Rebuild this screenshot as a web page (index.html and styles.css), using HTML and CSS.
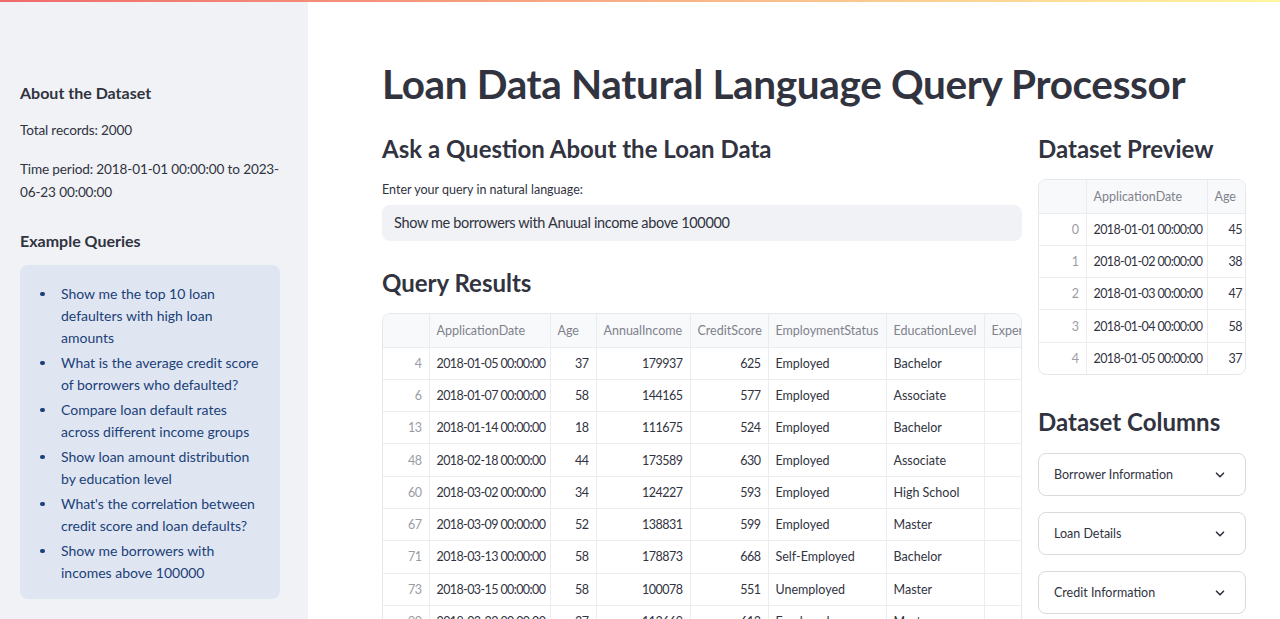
FILE: index.html
```html
<!DOCTYPE html>
<html lang="en">
<head>
<meta charset="utf-8">
<title>Loan Data Natural Language Query Processor</title>
<link rel="stylesheet" href="styles.css">
</head>
<body>
<div class="decoration"></div>
<div class="app">
  <aside class="sidebar">
    <h4 class="side-h">About the Dataset</h4>
    <p class="side-p">Total records: 2000</p>
    <p class="side-p">Time period: 2018-01-01 00:00:00 to 2023-06-23 00:00:00</p>
    <h4 class="side-h side-h2">Example Queries</h4>
    <div class="info">
      <ul class="info-list">
        <li>Show me the top 10 loan defaulters with high loan amounts</li>
        <li>What is the average credit score of borrowers who defaulted?</li>
        <li>Compare loan default rates across different income groups</li>
        <li>Show loan amount distribution by education level</li>
        <li>What's the correlation between credit score and loan defaults?</li>
        <li>Show me borrowers with incomes above 100000</li>
      </ul>
    </div>
  </aside>
  <main class="main">
    <h1 class="title">Loan Data Natural Language Query Processor</h1>
    <div class="cols">
      <section class="col-left">
        <h3 class="h3">Ask a Question About the Loan Data</h3>
        <label class="label">Enter your query in natural language:</label>
        <div class="input">Show me borrowers with Anuual income above 100000</div>
        <h3 class="h3 h3-results">Query Results</h3>
        <div class="grid">
          <table class="tbl tbl-main">
            <colgroup>
              <col style="width:46px"><col style="width:121px"><col style="width:46px"><col style="width:94px"><col style="width:78px"><col style="width:118px"><col style="width:98px"><col style="width:130px">
            </colgroup>
            <thead>
              <tr><th></th><th>ApplicationDate</th><th>Age</th><th>AnnualIncome</th><th>CreditScore</th><th>EmploymentStatus</th><th>EducationLevel</th><th>Experience</th></tr>
            </thead>
            <tbody>
              <tr><td class="idx">4</td><td class="dt">2018-01-05 00:00:00</td><td class="num">37</td><td class="num">179937</td><td class="num">625</td><td>Employed</td><td>Bachelor</td><td class="num"></td></tr>
              <tr><td class="idx">6</td><td class="dt">2018-01-07 00:00:00</td><td class="num">58</td><td class="num">144165</td><td class="num">577</td><td>Employed</td><td>Associate</td><td class="num"></td></tr>
              <tr><td class="idx">13</td><td class="dt">2018-01-14 00:00:00</td><td class="num">18</td><td class="num">111675</td><td class="num">524</td><td>Employed</td><td>Bachelor</td><td class="num"></td></tr>
              <tr><td class="idx">48</td><td class="dt">2018-02-18 00:00:00</td><td class="num">44</td><td class="num">173589</td><td class="num">630</td><td>Employed</td><td>Associate</td><td class="num"></td></tr>
              <tr><td class="idx">60</td><td class="dt">2018-03-02 00:00:00</td><td class="num">34</td><td class="num">124227</td><td class="num">593</td><td>Employed</td><td>High School</td><td class="num"></td></tr>
              <tr><td class="idx">67</td><td class="dt">2018-03-09 00:00:00</td><td class="num">52</td><td class="num">138831</td><td class="num">599</td><td>Employed</td><td>Master</td><td class="num"></td></tr>
              <tr><td class="idx">71</td><td class="dt">2018-03-13 00:00:00</td><td class="num">58</td><td class="num">178873</td><td class="num">668</td><td>Self-Employed</td><td>Bachelor</td><td class="num"></td></tr>
              <tr><td class="idx">73</td><td class="dt">2018-03-15 00:00:00</td><td class="num">58</td><td class="num">100078</td><td class="num">551</td><td>Unemployed</td><td>Master</td><td class="num"></td></tr>
              <tr><td class="idx">90</td><td class="dt">2018-03-22 00:00:00</td><td class="num">37</td><td class="num">113669</td><td class="num">613</td><td>Employed</td><td>Master</td><td class="num"></td></tr>
              <tr><td class="idx">95</td><td class="dt">2018-03-27 00:00:00</td><td class="num">41</td><td class="num">152340</td><td class="num">640</td><td>Employed</td><td>Bachelor</td><td class="num"></td></tr>
            </tbody>
          </table>
        </div>
      </section>
      <section class="col-right">
        <h3 class="h3">Dataset Preview</h3>
        <div class="grid">
          <table class="tbl tbl-preview">
            <colgroup>
              <col style="width:47px"><col style="width:121px"><col style="width:38px">
            </colgroup>
            <thead>
              <tr><th></th><th>ApplicationDate</th><th class="last">Age</th></tr>
            </thead>
            <tbody>
              <tr><td class="idx">0</td><td class="dt">2018-01-01 00:00:00</td><td class="num last">45</td></tr>
              <tr><td class="idx">1</td><td class="dt">2018-01-02 00:00:00</td><td class="num last">38</td></tr>
              <tr><td class="idx">2</td><td class="dt">2018-01-03 00:00:00</td><td class="num last">47</td></tr>
              <tr><td class="idx">3</td><td class="dt">2018-01-04 00:00:00</td><td class="num last">58</td></tr>
              <tr><td class="idx">4</td><td class="dt">2018-01-05 00:00:00</td><td class="num last">37</td></tr>
            </tbody>
          </table>
        </div>
        <h3 class="h3 h3-columns">Dataset Columns</h3>
        <div class="expanders">
          <div class="expander"><span>Borrower Information</span><svg class="chev" width="12" height="12" viewBox="0 0 12 12"><path d="M2.5 4.2 L6 7.7 L9.5 4.2" fill="none" stroke="#31333f" stroke-width="1.6" stroke-linecap="round" stroke-linejoin="round"/></svg></div>
          <div class="expander"><span>Loan Details</span><svg class="chev" width="12" height="12" viewBox="0 0 12 12"><path d="M2.5 4.2 L6 7.7 L9.5 4.2" fill="none" stroke="#31333f" stroke-width="1.6" stroke-linecap="round" stroke-linejoin="round"/></svg></div>
          <div class="expander"><span>Credit Information</span><svg class="chev" width="12" height="12" viewBox="0 0 12 12"><path d="M2.5 4.2 L6 7.7 L9.5 4.2" fill="none" stroke="#31333f" stroke-width="1.6" stroke-linecap="round" stroke-linejoin="round"/></svg></div>
        </div>
      </section>
    </div>
  </main>
</div>
</body>
</html>
```

FILE: styles.css
```css
* { box-sizing: border-box; }
html, body {
  margin: 0;
  padding: 0;
  height: 100%;
  overflow: hidden;
  background: #ffffff;
  color: #31333f;
  font-family: "Lato", "Noto Sans", sans-serif;
}
.decoration {
  position: fixed;
  top: 0;
  left: 0;
  right: 0;
  height: 2px;
  background: linear-gradient(90deg, #f06a6a, #fff6a0);
  z-index: 10;
}
.app {
  display: flex;
  height: 100%;
}
.sidebar {
  width: 308px;
  flex: 0 0 308px;
  background: #f0f2f6;
  padding: 82px 28px 0 20px;
}
.side-h {
  margin: 0;
  font-size: 16px;
  font-weight: 700;
  line-height: 22px;
}
.side-h2 { margin-top: 25px; }
.side-p {
  margin: 15px 0 0;
  font-size: 13.6px;
  letter-spacing: -0.15px;
  line-height: 23.5px;
}
.info {
  margin-top: 13px;
  background: #dfe6f2;
  border-radius: 8px;
  padding: 18px 16px 15px 16px;
  color: #1b3f78;
}
.info-list {
  margin: 0;
  padding-left: 25px;
  list-style: none;
  font-size: 14px;
  line-height: 22px;
}
.info-list li {
  position: relative;
  margin-bottom: 3px;
}
.info-list li::before {
  content: "";
  position: absolute;
  left: -21px;
  top: 9px;
  width: 4.5px;
  height: 4.5px;
  border-radius: 50%;
  background: currentColor;
}
.info-list li:last-child { margin-bottom: 0; }
.main {
  flex: 1;
  padding: 0 33px 0 74px;
  min-width: 0;
}
.title {
  margin: 58px 0 0;
  font-size: 40.5px;
  font-weight: 700;
  line-height: 52px;
  letter-spacing: -0.35px;
  white-space: nowrap;
}
.cols {
  display: grid;
  grid-template-columns: 640px 208px;
  gap: 16px;
  margin-top: 21px;
}
.col-left, .col-right { min-width: 0; }
.h3 {
  margin: 0;
  font-size: 24px;
  font-weight: 700;
  line-height: 36px;
}
.label {
  display: block;
  margin-top: 15px;
  font-size: 12.5px;
  line-height: 16px;
}
.input {
  margin-top: 7px;
  height: 36px;
  background: #f0f2f6;
  border-radius: 8px;
  padding: 0 12px;
  font-size: 14.5px;
  letter-spacing: -0.35px;
  line-height: 36px;
}
.h3-results { margin-top: 24px; }
.grid {
  margin-top: 12px;
  border: 1px solid #e6e7eb;
  border-radius: 8px;
  overflow: hidden;
}
.tbl {
  border-collapse: collapse;
  table-layout: fixed;
  font-size: 12.5px;
}
.tbl-main { width: 731px; }
.tbl-preview { width: 206px; }
.tbl th, .tbl td {
  height: 32.3px;
  padding: 0 7px;
  border-right: 1px solid #ebecef;
  border-bottom: 1px solid #ebecef;
  white-space: nowrap;
  overflow: hidden;
}
.tbl th {
  height: 33px;
  background: #f8f9fb;
  color: #7f818c;
  font-weight: 400;
  text-align: left;
}
.tbl td { color: #31333f; }
.tbl td.idx { color: #9a9ca5; text-align: right; letter-spacing: -0.5px; }
.tbl td.num { text-align: right; letter-spacing: -0.5px; }
.tbl td.dt { letter-spacing: -0.6px; }
.tbl .last { border-right: none; padding-right: 3px; }
.tbl tbody tr:last-child td { border-bottom: none; }
.h3-columns { margin-top: 29px; }
.expanders {
  display: flex;
  flex-direction: column;
  gap: 16px;
  margin-top: 13px;
}
.expander {
  height: 43px;
  border: 1px solid #d8dae0;
  border-radius: 8px;
  display: flex;
  align-items: center;
  justify-content: space-between;
  padding: 0 19px 0 15px;
  font-size: 12.5px;
}
.chev { display: block; }
```
